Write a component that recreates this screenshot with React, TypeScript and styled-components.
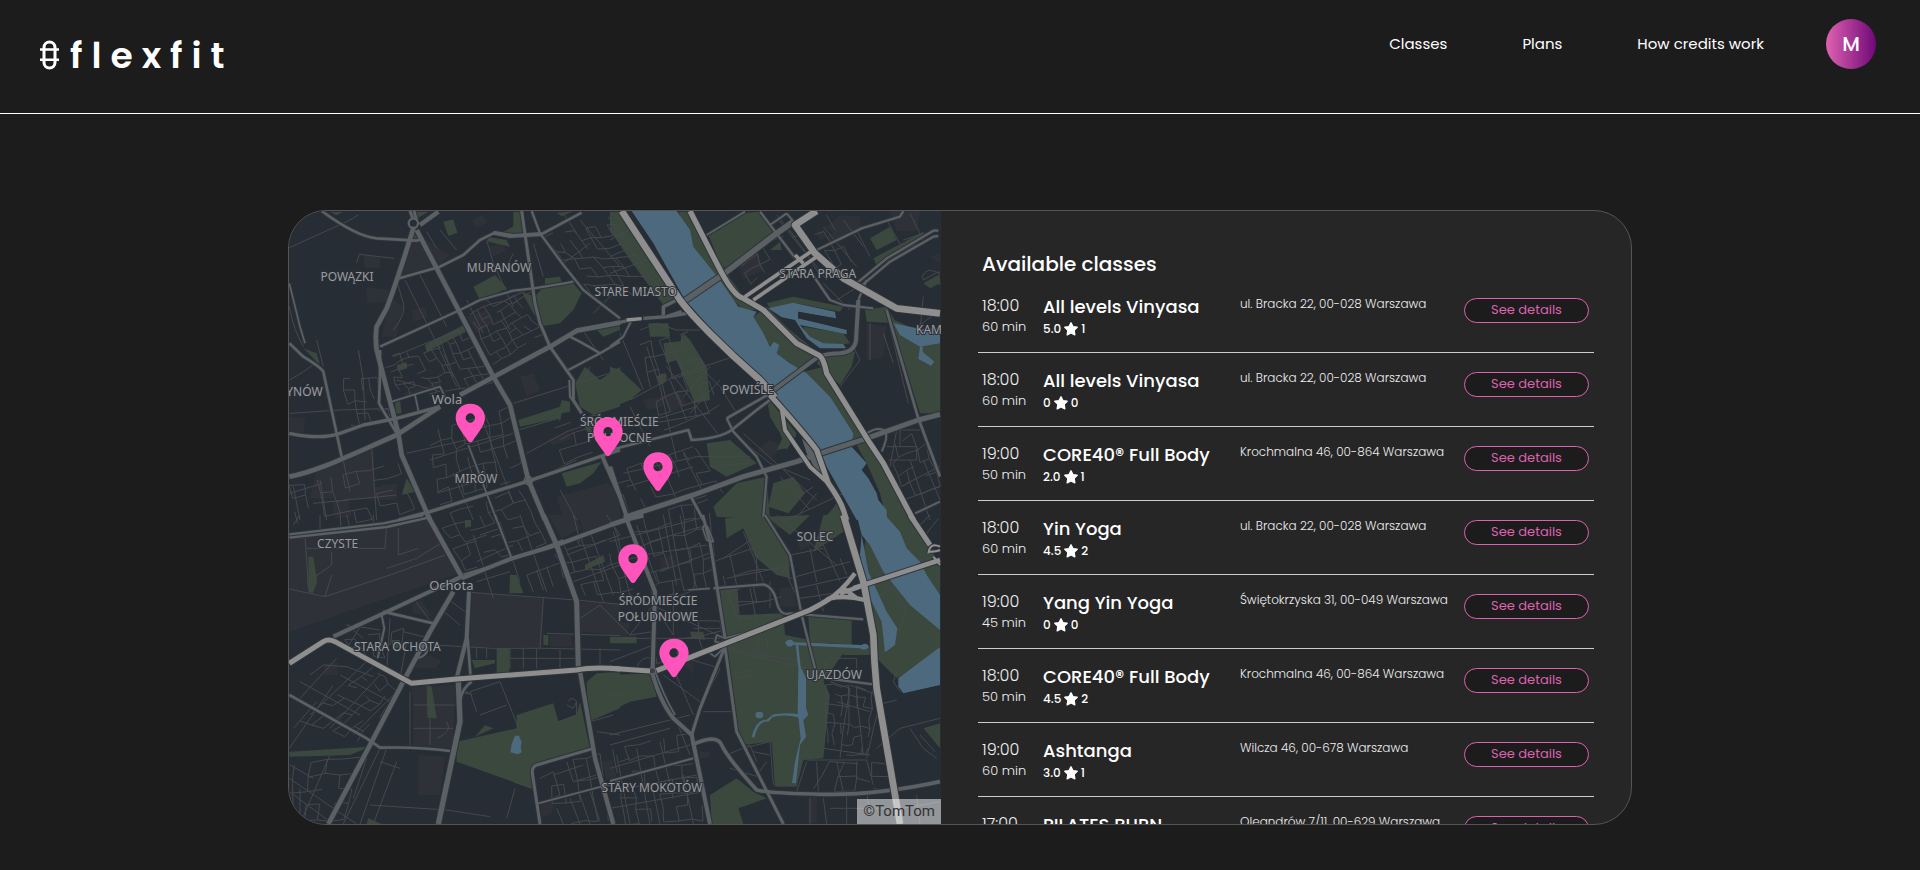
import React from 'react';
import styled, { createGlobalStyle } from 'styled-components';

const GlobalStyle = createGlobalStyle`
  *, *::before, *::after { box-sizing: border-box; }
  body {
    margin: 0;
    background: #1c1c1c;
    color: #fff;
    font-family: Poppins, Inter, 'Noto Sans', sans-serif;
  }
`;

/* ---------- header ---------- */

const Header = styled.header`
  display: flex;
  justify-content: space-between;
  align-items: flex-start;
  height: 114px;
  padding: 19px 44px 0 40px;
  border-bottom: 1px solid #fff;
`;

const Brand = styled.a`
  display: flex;
  align-items: center;
  gap: 11px;
  height: 72px;
  color: #fff;
  font-size: 36px;
  font-weight: 600;
  letter-spacing: 9px;
  text-decoration: none;
`;

const Nav = styled.nav`
  display: flex;
  align-items: center;
  gap: 75px;
  height: 50px;
`;

const NavLink = styled.a`
  color: #fff;
  font-size: 15px;
  line-height: 22px;
  text-decoration: none;
`;

const Avatar = styled.button`
  width: 50px;
  height: 50px;
  margin-left: -13px;
  padding: 0;
  border: 0;
  border-radius: 50%;
  background: linear-gradient(90deg, #de62b0, #6f0877);
  color: #fff;
  font: inherit;
  font-size: 20px;
  font-weight: 500;
`;

/* ---------- page ---------- */

const Main = styled.main`
  padding: 96px 15% 45px;
`;

const Card = styled.div`
  display: grid;
  grid-template-columns: 652fr 690fr;
  height: calc(100vh - 255px);
  min-height: 400px;
  border: 1px solid #555;
  border-radius: 38px;
  background: #262626;
  overflow: hidden;
`;

const MapPane = styled.section`
  position: relative;
  min-width: 0;
  min-height: 0;
  background: #272d35;
  overflow: hidden;
`;

const MapSvg = styled.svg`
  display: block;
  width: 100%;
  height: 100%;
`;

const Attribution = styled.a`
  position: absolute;
  right: 0;
  bottom: 0;
  padding: 0 6px;
  background: rgba(255, 255, 255, 0.5);
  color: #333;
  font-family: Roboto, sans-serif;
  font-size: 15px;
  line-height: 25px;
  text-decoration: none;
`;

const ListPane = styled.section`
  min-width: 0;
  min-height: 0;
  padding: 38px 37px 0;
  overflow-y: auto;
  scrollbar-width: none;
`;

const Heading = styled.h1`
  margin: 0;
  padding-left: 4px;
  font-size: 20px;
  font-weight: 500;
  line-height: 30px;
`;

const List = styled.ul`
  margin: 0;
  padding: 0;
  list-style: none;
`;

const Row = styled.li`
  display: grid;
  grid-template-columns: 61px 197px 1fr 125px;
  align-items: start;
  height: 74px;
  padding: 16px 5px 0 4px;
  border-bottom: 1px solid #ccc;
`;

const Stack = styled.div`
  display: flex;
  flex-direction: column;
`;

const Time = styled.time`
  font-size: 16px;
  font-weight: 300;
  line-height: 22px;
  color: #eee;
`;

const Duration = styled.span`
  font-size: 13px;
  font-weight: 300;
  line-height: 20px;
  color: #eee;
`;

const Name = styled.h2`
  margin: 0;
  font-size: 18px;
  font-weight: 500;
  line-height: 24px;
  white-space: nowrap;
`;

const Rating = styled.span`
  display: flex;
  align-items: center;
  gap: 3px;
  font-size: 12px;
  font-weight: 500;
  line-height: 19px;
`;

const Address = styled.address`
  font-size: 12px;
  font-style: normal;
  font-weight: 300;
  line-height: 18px;
  color: #eee;
  white-space: nowrap;
`;

const DetailsButton = styled.button`
  height: 25px;
  margin-top: 3px;
  padding: 0 0 1px;
  border: 1px solid #de62b0;
  border-radius: 13px;
  background: #1c1c1c;
  color: #de62b0;
  font: inherit;
  font-size: 13px;
  line-height: 20px;
`;

/* ---------- map data ---------- */
/* The city is cut into four tiles; every tile has its own origin. */

type Road = [width: number, d: string];
interface Tile {
  x: number;
  y: number;
  urban: string;
  green: string;
  water: string;
  minor: string;
  mid: Road[];
  major: Road[];
}

const tiles: Tile[] = [
  {
    x: 0, y: 0,
    urban: 'M250 165l50 5v35l-45 0ZM258 262l82 8-20 35-58 5ZM400 115l30 0 80 50-40 35-110 35ZM330 290l40 30-20 90-45 0ZM200 780l80-35 5 115 65-10v50l-260-5 20-85ZM560 350l60-20 20 40-50 30ZM395 330l40-10 10 30-45 15ZM720 530l40-10 20 50-40 20ZM830 890l150-40 40 20v90H850ZM28 650l47 5-5 45-42-10ZM575 60l30-15 20 20-35 20ZM625 140l40-10 15 20-40 20ZM370 580l110-35 5 20-110 30ZM800 720l60-25 20 20-60 20ZM155 900l50 0 10 50-50 5Z',
    green: 'M490 65l30-7 12 40-27 10ZM580 260l65-35 35 40-40 20-40 15ZM725 275l40 15 25-30 90-10 25 30-25 50-40 40-50 8-30-38ZM795 235l45-5 5 15-50 10ZM435 435l115-60 8 20-118 60ZM350 495l30-8 2 18-28 8ZM700 35h30v70l-70-5 40-20ZM620 110l60 10 10 20-65-15ZM885 550l30-50 45 40 60-40v120l-80 25-40-25ZM715 660l125-40 5-20 25 5v30l-25 5-5 25-5-10-115 25ZM845 820l120-35-25 35-40 30-40 10ZM345 605l15-5 5 40-18 2ZM365 885l40-10-25-40ZM400 95l20 25-30 5ZM400 35h45l-30 18ZM70 445l40 15 10 35ZM1000 40h20v70l-25-15ZM950 390l70-20v20l-50 20ZM150 36l40 0-20 10ZM830 38l50-4-35 15ZM910 670l20 0 10 40-15-5Z',
    water: '',
    minor: 'M28 143L200 65M200 65l35-20M230 188l8-25 105 12M28 320Q40 390 70 440M110 420l20 80M375 240L470 430 530 560M420 225L500 380M340 390Q380 340 370 310L350 240M235 450l15 90 5 120M28 540q40-20 90-60M28 640L180 630 340 625M185 760l25 115M275 745l15 215M28 880l100-30M100 910L350 885M40 860L60 960M120 840L140 960M480 90l50 60M440 95l30 50M620 120l20 70 60 130M700 160l-30 60M850 40l40 60M760 130L790 230M900 60L1020 200M850 190l80-60M700 610L1020 510M715 690l120-35M740 760l120-65 120-40M780 830l110-50M450 780L700 700M470 880L640 830M520 820l60 140M600 640L700 910M380 760l200-45M840 870l50 90M350 540L480 575M340 470L560 380M480 420l40 110M940 340l80-80M900 380L970 480M985 50l35 60M930 500l-20 40M560 300L610 400M600 280l40 40 120-60M660 330l30 60M700 310l60-40',
    mid: [
      [14, 'M400 85C380 150 345 260 320 325L290 380Q285 410 290 450L355 700 365 765 450 960'],
      [8, 'M300 450V520L297 610 350 700'],
      [14, 'M410 90L640 530 690 615 745 840 795 960'],
      [14, 'M28 830C110 815 200 770 350 705L480 620M540 585L810 440 890 392 1020 368'],
      [10, 'M28 700Q120 720 180 700L250 675 350 655 480 620'],
      [8, 'M125 33Q230 110 290 115L410 122 430 115M28 430L70 470Q120 500 130 515L185 770'],
      [8, 'M350 237L480 200 550 165 600 120 640 100 690 110 780 105 905 38M640 96L700 106 785 100'],
      [7, 'M300 440L540 330 600 300 700 272 760 265M760 265Q830 255 880 245'],
      [9, 'M725 33L755 240 765 310 780 370 810 440 880 540 880 600 905 640'],
      [6, 'M868 540L870 590 900 632'],
      [7, 'M755 33L780 100 850 195 910 270 1020 355M865 510L960 460 1020 425M870 410Q910 430 960 460'],
      [9, 'M390 33L400 60M402 33L410 60'],
      [13, 'M420 75L475 35'],
      [10, 'M355 960L450 935 740 845 965 768 1020 750'],
      [12, 'M965 765L1020 890'],
      [5, 'M335 605L480 560 500 600M565 735L650 960M405 585l12 55M28 250L60 380 75 430'],
    ],
    major: [],
  },
  {
    x: 990, y: 0,
    urban: 'M380 180l60-30 20 60-60 30ZM620 100l30-20 20 20-40 20ZM840 33l90 0-10 60-60 0ZM640 90l20 40 90-50 0-30-60-5ZM770 370l60 10-10 90-50 10ZM160 590l50-20 20 40-50 30ZM100 600l60-10 0 30-50 10ZM440 750l40 -30 40 20-40 35ZM390 180l40-15 15 40-40 15ZM960 170l30-10v30Z',
    green: 'M0 35h30L215 300l-55 15L60 180 0 90ZM205 35h40L350 220l50 70 60 40-60 0-80-80-70-100-20-50ZM295 105l100-65 55-5 50 65-150 110-20-20ZM430 350l40-30 70 70 100 80-70 40-70-50-50-60ZM470 310l80-20 150 30-10 15-130-25-80 15ZM580 380l120 20 20 30-80 10-50-30ZM640 460l95-5-10 45-35 55-70-65ZM580 515l60-15 60 100 80 120 70 110 70 130h-90l-20-80-40-90-50-90-70-110ZM780 115l60-35 20 40-60 30ZM790 175l150-80 5 10-65 65-80 25ZM765 330l65-10 30 50-90-5ZM840 355l150 65v220h-60ZM0 500l30 10 65 60-35 30-60 25ZM160 430l80-10 50 80 10 100-45 10-55-130-30 10ZM115 370h60l5 40h-60ZM140 530q30-20 30 0t-20 25ZM290 730l70-10 80 70-90 40-50-30ZM310 920l70-70 90-20 10 130-160-10ZM490 850l60-20 35 50-50 60-60-20ZM470 590l90 110-30 50-20-50-30-50ZM640 960l40-50 40 50ZM480 150l30-25 5 25ZM500 750l20-40 40-5-30 40ZM0 380l25-8-5 20-20 5ZM220 400l20 20-15 20-15-15ZM940 250l45-25 5 25-30 15Z',
    water: 'M65 33H200L240 90 250 140 330 240 385 320 440 335 430 350 460 400 480 440 492 425 508 435 500 460 540 490 590 520 660 590 730 700 725 740 770 790 755 810 775 835 800 880 805 900 830 930V960H740L650 800 625 740 490 580 370 460 225 300 130 130ZM475 325L550 308 675 335 678 355 565 335 565 355 710 390V403L570 375 600 410 640 430 700 432 708 445 630 445 590 415 555 360 515 352ZM850 370L935 388 990 385V430L930 440 870 405ZM930 440h8v15l35 30-10 12-38-20Z',
    minor: 'M90 390L140 370 200 390 270 390M30 400L100 570M60 600L190 530 370 470M110 440L150 560 200 780M170 500l60 80 100 130M240 470L330 560 380 640M300 500l-80 90M330 540l-90 100M60 620L120 740M180 540l50 120M130 660L260 620M70 680L300 640M130 780L250 740M40 820L260 770 420 770M50 860l200-60M150 780l50 120M220 760l60 120M300 800L420 790M200 480l20 40M500 100l60 90M530 80l120 160M460 130l60-20M640 80L740 200M700 60l60 80M740 90l40 80M830 60l50 90M900 40l40 80M880 120l60-20M640 250L720 330M680 300L760 250M940 290L930 390M910 390L990 330M690 560L750 480 730 440M780 370V480M820 400L850 490M830 340L895 610M560 690L660 760M510 830L600 930M550 900l60-40M570 940l50-60M530 960L700 880M370 700L480 790 600 840M400 700L620 900M830 740h90v40h-85M840 800L860 690M860 690h70M870 680v60M890 850L990 800M880 900L990 860M900 780L960 960M940 780L990 900M940 240l45-25 5 40M940 240q-10-20 20-30l30 10M0 120L60 90 130 200M0 170L70 140M0 220L110 180M20 80L110 240M500 45l50 60M620 480l60 60',
    mid: [
      [17, 'M220 305L330 230 350 215 500 100 550 65'],
      [12, 'M485 575L625 470Q660 460 690 460 735 455 738 420L745 300'],
      [8, 'M0 750L235 690 245 720Q330 715 365 690L440 630 480 600M350 655L490 575'],
      [7, 'M350 655L370 695 440 770 470 830 460 950'],
      [15, 'M50 950L250 885 400 830 560 785 640 757 770 715 925 660 990 643'],
      [8, 'M240 885L280 960M830 330L925 655 990 830'],
      [12, 'M0 800L50 950'],
      [7, 'M450 35L560 180M605 220L660 300 700 315 790 325M620 150L755 85 870 50 880 33M740 250L830 175 970 92 985 92M745 265L840 185 970 110 985 108'],
      [6, 'M290 105L405 35M480 75L530 40M530 40l25 30M0 440L40 410 65 360M745 300L770 240M770 700Q800 680 820 690T815 755M915 940L990 905'],
      [10, 'M0 374L60 360M100 355L170 350 215 335M160 345V320L200 300M170 350l60 -10'],
    ],
    major: [
      [20, 'M35 33L210 300Q240 340 300 400L370 468 450 540 495 592'],
      [16, 'M480 585L520 630Q590 710 620 750L655 850Q690 900 700 930L710 960'],
      [12, 'M515 625L525 690 600 800 655 850'],
      [16, 'M240 33L320 190Q370 290 400 295L460 330 560 430 625 465Q640 470 650 520L780 730 820 790 910 960'],
      [20, 'M620 33L555 75 615 160 700 235 860 325 990 340'],
      [11, 'M405 290L610 150M430 300L620 170M555 165L580 190'],
      [10, 'M50 360L95 356'],
    ],
  },
  {
    x: 0, y: 945,
    urban: 'M28 70l292-30 120-25 100 160-340 115-172 60ZM575 232l215 18-5 150-215-5ZM395 515l130-5-5 190-120-5v-130ZM415 720l80 5-15 115h-65ZM895 260l125 5v95l-120-10ZM805 0h80l20 40-60 30ZM900 0h120v20l-110 40ZM395 270l30-15 30 50-55-10ZM410 430l40-10 35 20-20 20-60 0ZM810 360h65v35h-65ZM965 740l30-5 15 50-30 10ZM780 865l40 0-5 35-30 5ZM130 445l40 0 5 35-40 0Z',
    green: 'M85 125h15l12 75-14 35-13-5ZM440 510l15 5 15 95-28-2ZM530 680l180-40v-40l110-35 15 55 55-20 10-40 30 140-170 50-5 70-225-80ZM920 500l30-25 70-5v110l-95 40ZM690 180h20l20 55h-42ZM650 400h38v75h-38ZM575 435h70v10l-60 15ZM28 710l242-15-60 25-182 5ZM585 665l30-35 25 10ZM265 910l40 17h-45ZM915 150l55-30 5 20-60 25ZM555 15h18v20l-18 3ZM530 510l50 30-45-5ZM335 375l25 0-5 25-18 0ZM790 360l15 0v30h-15Z',
    water: 'M705 662h12l8 20-3 15 3 15-12 6-22-6 4-25Z',
    minor: 'M28 222L135 245 330 180 510 115M80 100H315L320 30M75 60L85 220M155 110v40l-50 35M155 180L135 245M355 40v80l60-20M320 160L410 130 490 80M40 30L60 0M120 0V40M200 0l10 40M280 0v30M400 250L460 330M480 280L540 330M500 250L555 290M460 390L640 400 800 400 1020 405M570 232L890 255 1020 268M790 250L780 400M690 400V460M730 400v60M770 400v60M840 405v55M590 400v30M620 400v30M690 430H890M800 355L1020 362M960 400v50M90 480l40-30 70 5 80 30M60 550L170 430M90 600L260 440M150 640L300 480M220 660L340 540M40 640L110 560M28 700L160 510M60 500L240 600M180 480L330 560M28 790L230 927M28 830L150 920M60 820v90M100 790L30 750M190 927L300 700M260 730L220 850M320 700L240 927M350 740L280 927M150 720L60 927M270 870L500 885 630 905M300 740l60 20M200 400L250 320M380 380L360 490M330 310L320 470M370 350l80 20M250 370L200 330 300 345M390 530L390 690M400 570H525M400 640H520M450 610V690M500 620q20 30-30 50M590 590L570 530 660 500 720 650M600 600L680 570M705 820L680 910M755 820L700 800M830 880L850 927M870 850L900 927M900 840L930 927M930 830L960 920M820 780l90-30M780 790l40-20 20 70-50 20M860 740l20 60 70-20M930 620L1000 600M950 650L1020 660M865 560q10-20 25 0l-10 20-20-10M890 560V600L835 620M580 60L640 250M660 20L720 200M720 0L800 230M600 60l60-20 20 60M560 80L620 60M590 140L700 90M740 180l110-40M740 180l20 50M770 165l20 60M800 155l20 60M840 140l10 50M590 200L690 170M900 60L970 260M930 50L1000 240M860 120L1020 60M880 200L1020 150M900 310l60-40 60 60M880 0L900 80M980 0l40 60',
    mid: [
      [7, 'M28 58L310 25 430 0M28 68L320 36 445 8'],
      [14, 'M442 0L545 185'],
      [12, 'M545 190L690 132 830 90 1020 20'],
      [5, 'M550 178L680 140 850 75'],
      [6, 'M645 0L695 130'],
      [15, 'M790 0L830 90 890 260 895 460'],
      [12, 'M160 365L300 300 460 225 545 185'],
      [14, 'M520 230L450 350 375 490 270 690 145 927'],
      [12, 'M567 230L560 370 530 490'],
      [8, 'M563 370L572 490M310 290L460 325M28 540L260 670 300 698Q420 695 510 708'],
      [6, 'M305 300L313 340 293 430M410 430Q450 420 440 390'],
      [16, 'M535 500L540 620 475 927'],
      [8, 'M575 500Q545 520 540 560'],
      [13, 'M900 470L945 730 1000 927'],
      [9, 'M940 700L770 750Q755 755 757 775L780 927'],
      [5, 'M775 865L1020 800'],
    ],
    major: [[15, 'M28 445L130 380Q145 370 165 380L395 505 530 492 890 465Q940 455 1020 462']],
  },
  {
    x: 990, y: 945,
    urban: 'M150 130l40-10 10 30-45 20ZM0 315l60 10-10 40-50-5ZM510 220l40 -5 10 60-50 0ZM560 75l40-5 0 25-30 10ZM595 840l25 5 0 80-25 0ZM270 710l30 0-5 20-25 0ZM220 445l30-5 0 40ZM475 0l30 10 10 30-20 0Z',
    green: 'M345 10L460 5 535 110 540 190 500 180 435 125 400 40 350 70ZM470 5L600 0 540 60ZM330 225L380 220 385 300 520 295 525 360 700 395 700 415 640 500 660 540 640 730 580 735 560 815H495L485 680 400 690 380 640 350 400 340 360ZM595 305H725V390L600 380ZM0 480L125 475 140 545 60 560 0 590ZM780 0H900L990 150V440L920 460 860 490 780 410 770 240 750 170ZM300 840L380 790 430 830 470 850 385 880 400 927H305ZM940 640L990 625V700ZM610 110L700 50 690 0H640ZM240 350h40l5 25-40-5ZM0 365h80v20H0ZM700 390l95 5 0 25-95 0Z',
    water: 'M740 0H825L870 50 890 100 930 140 950 180 990 240V345L900 270 820 170 780 90 755 60ZM755 60L775 170 830 290 862 340 855 390 825 412 815 320 770 230 750 120ZM865 490L985 400H990V510L880 535 865 515ZM525 383Q540 365 552 382L755 390Q770 380 777 396 765 410 750 400L550 390Q535 402 525 383ZM557 390H565L572 455 588 490V580L595 600 580 615 588 665 570 690 558 805H546L555 740 572 670 563 590 565 460ZM425 665Q440 612 470 614L490 598Q550 590 575 602L570 608Q520 596 488 606L475 620Q445 615 433 668ZM436 600a12 10 0 1 1 24 0a12 10 0 1 1-24 0Z',
    minor: 'M0 80L270 10M0 150L100 120 290 90M150 170L310 110M10 50L60 240M80 30L140 200M160 0L200 210M210 0L260 220M120 80L290 30M60 240L345 370M0 300L60 360 130 350M60 360L130 270 240 230M190 360L130 270M0 370H340M190 230V360M0 440L130 390M80 460Q90 420 130 430M310 140L460 90M350 190L550 150M340 130L430 70M400 50L460 200M360 120L380 210M440 120V200M380 220L390 330M420 220L440 320M380 260H470M480 200V280M515 180L540 120 640 100M540 190L720 140M560 220L740 180M600 100L620 200M640 90L690 200M690 130L710 180M570 250L700 230M620 210L640 290M500 0L680 150M350 405L590 460M350 400L570 440M0 660L240 600M0 690L180 640M20 720L60 927M80 700L120 927M150 680L190 850M200 620L240 720M30 740L60 730M0 760L240 690M0 830L260 780M0 880L280 830M130 830L150 927M220 780L250 927M160 480L270 560M190 460L250 600M230 430L330 460M280 590H370M300 520L330 460M350 720L420 690 440 740M360 760L460 790M400 700L480 680 490 810M430 710L480 720M440 780L470 740M650 430H740V460M650 430L640 480 790 510M660 500L720 520 700 640 690 730M720 510L800 540M680 560L780 590M740 540L760 720M800 600L770 730M590 735H770L790 810M640 700L780 720M620 740L625 830M680 740L700 830M740 740V790L780 800M590 740L560 830M600 850V927M640 850L650 927M710 840V927M770 830L780 900M660 880H850M880 880L990 860M920 840L930 927M800 700L870 640 990 610M900 640L940 700 980 730M930 660L975 710M800 570L860 555M860 470L850 500 870 530M810 240L850 220 890 280 860 370 820 410M790 160L840 220 880 200M900 60L960 0M930 80L985 10M250 340L340 340M0 540H30M445 370l30 5-5 40-25-5ZM375 475l50-10 0 15-48 8Z',
    mid: [
      [15, 'M0 30L60 10 100 0'],
      [12, 'M45 0L80 90 135 230 128 460'],
      [9, 'M278 0L300 80 345 370'],
      [5, 'M278 40Q285 20 295 40L310 80 290 75ZM235 225L300 220'],
      [7, 'M310 220L460 208Q490 215 500 260T540 295L760 313M465 0L540 120 575 300 615 460M650 490L790 508'],
      [12, 'M125 468Q150 560 190 610L245 660 300 927'],
      [5, 'M135 468Q160 540 195 600M345 370L320 360 315 380 345 385M345 395L315 425 300 415'],
      [9, 'M345 395L270 580 245 660M345 395L380 650 520 927'],
      [11, 'M245 690Q320 655 335 690T440 825Q480 835 640 838T990 800'],
      [6, 'M0 798L250 730M345 370L400 355M0 880l10 47'],
    ],
    major: [
      [15, 'M0 460L120 468M140 467L600 285Q640 265 660 250'],
      [14, 'M730 220L990 135'],
      [20, 'M700 0L760 200 790 360Q792 440 800 520L870 927'],
      [13, 'M650 256Q690 235 735 175M660 250Q710 240 765 255M700 220L740 250M690 235L750 215'],
      [15, 'M900 0L960 90'],
      [6, 'M955 115Q960 80 990 95M955 110Q980 110 990 105M970 125L990 150'],
    ],
  },
];

/* Side streets: each block is a quadrilateral filled with an uneven grid. */
type Block = [number, number, number, number, number, number, number, number, number, number];

const blocks: Block[] = [
  [310, 480, 560, 385, 640, 550, 370, 590, 11, 6],
  [570, 340, 700, 290, 790, 400, 640, 490, 6, 6],
  [790, 110, 1010, 70, 1150, 290, 930, 280, 7, 7],
  [440, 700, 690, 620, 730, 830, 480, 910, 7, 6],
  [190, 540, 290, 530, 330, 660, 210, 680, 4, 4],
  [30, 860, 350, 790, 400, 930, 60, 1010, 8, 4],
  [470, 950, 720, 870, 800, 1030, 560, 1110, 7, 5],
  [830, 680, 960, 640, 980, 740, 850, 790, 3, 3],
  [1080, 430, 1230, 400, 1320, 620, 1150, 690, 5, 6],
  [1000, 820, 1250, 740, 1330, 880, 1050, 940, 6, 4],
  [1050, 960, 1280, 900, 1310, 1150, 1120, 1200, 6, 6],
  [810, 1030, 1000, 970, 1060, 1170, 880, 1190, 5, 5],
  [1330, 1130, 1520, 1100, 1560, 1230, 1370, 1260, 5, 3],
  [60, 1560, 280, 1400, 360, 1480, 230, 1620, 6, 5],
  [190, 1320, 370, 1290, 360, 1420, 250, 1380, 5, 3],
  [40, 1690, 240, 1670, 190, 1860, 40, 1860, 4, 4],
  [1000, 1650, 1230, 1600, 1270, 1860, 1040, 1870, 6, 6],
  [1640, 1450, 1780, 1470, 1760, 1670, 1640, 1660, 6, 7],
  [1820, 750, 1920, 690, 1980, 860, 1880, 900, 4, 4],
  [1500, 60, 1640, 40, 1710, 190, 1620, 220, 4, 3],
  [1370, 170, 1440, 130, 1480, 200, 1410, 250, 3, 3],
  [1120, 1280, 1320, 1260, 1330, 1330, 1130, 1390, 3, 2],
  [1650, 1690, 1820, 1690, 1840, 1770, 1600, 1770, 4, 2],
  [800, 1700, 960, 1660, 990, 1860, 830, 1870, 4, 3],
];

function noise(n: number) {
  const s = Math.sin(n * 12.9898) * 43758.5453;
  return s - Math.floor(s);
}

function sideStreets([ax, ay, bx, by, cx, cy, dx, dy, cols, rows]: Block, seed: number) {
  const node = (i: number, j: number) => {
    const u = i / cols;
    const v = j / rows;
    const k = seed * 997 + i * 31 + j * 7;
    const px = (ax * (1 - u) + bx * u) * (1 - v) + (dx * (1 - u) + cx * u) * v;
    const py = (ay * (1 - u) + by * u) * (1 - v) + (dy * (1 - u) + cy * u) * v;
    return `${Math.round(px + noise(k) * 10 - 5)} ${Math.round(py + noise(k + 3) * 10 - 5)}`;
  };
  let d = '';
  for (let i = 0; i <= cols; i++) {
    for (let j = 0; j <= rows; j++) {
      const k = seed * 131 + i * 17 + j * 5;
      if (i < cols && noise(k) > 0.42) d += `M${node(i, j)}L${node(i + 1, j)}`;
      if (j < rows && noise(k + 2) > 0.42) d += `M${node(i, j)}L${node(i, j + 1)}`;
    }
  }
  return d;
}

const streetPath = blocks.map(sideStreets).join('');

const labels: [x: number, y: number, text: string][] = [
  [201, 242, 'POWĄZKI'],
  [657, 216, 'MURANÓW'],
  [1067, 288, 'STARE MIASTO'],
  [1613, 234, 'STARA PRAGA'],
  [2002, 402, 'KAMIONEK'],
  [48, 587, 'MŁYNÓW'],
  [1403, 582, 'POWIŚLE'],
  [1018, 677, 'ŚRÓDMIEŚCIE'],
  [1018, 725, 'PÓŁNOCNE'],
  [588, 849, 'MIRÓW'],
  [173, 1043, 'CZYSTE'],
  [1605, 1022, 'SOLEC'],
  [1134, 1215, 'ŚRÓDMIEŚCIE'],
  [1134, 1263, 'POŁUDNIOWE'],
  [352, 1352, 'STARA OCHOTA'],
  [1662, 1437, 'UJAZDÓW'],
  [1116, 1775, 'STARY MOKOTÓW'],
];

const towns: [x: number, y: number, text: string][] = [
  [501, 611, 'Wola'],
  [514, 1170, 'Ochota'],
];

const pins: [x: number, y: number][] = [
  [571, 654],
  [984, 695],
  [1134, 800],
  [1059, 1076],
  [1182, 1359],
];

const MapLabel = styled.text<{ $town?: boolean }>`
  font-family: 'Noto Sans', sans-serif;
  font-size: ${(p) => (p.$town ? 39 : 36)}px;
  font-weight: 400;
  text-anchor: middle;
  fill: #9a9c9f;
  stroke: #2b3037;
  stroke-width: 6px;
  paint-order: stroke;
`;

function Roads({ kind, color, casing }: { kind: 'mid' | 'major'; color: string; casing: string }) {
  const draw = (stroke: string, extra: number) =>
    tiles.map((t) => (
      <g key={`${stroke}${t.x}-${t.y}`} transform={`translate(${t.x} ${t.y})`} stroke={stroke}>
        {t[kind].map(([w, d]) => (
          <path key={d} d={d} strokeWidth={w + extra} />
        ))}
      </g>
    ));
  return (
    <g fill="none" strokeLinejoin="round">
      {draw(casing, 6)}
      {draw(color, 0)}
    </g>
  );
}

function CityMap() {
  const area = (key: 'urban' | 'green' | 'water', fill: string) =>
    tiles.map((t) => (
      <path key={`${key}${t.x}-${t.y}`} transform={`translate(${t.x} ${t.y})`} d={t[key]} fill={fill} />
    ));
  return (
    <MapSvg viewBox="27 33 1956 1839" preserveAspectRatio="xMidYMid slice" role="img" aria-label="Map of Warsaw">
      {area('urban', '#2f3138')}
      {area('green', '#3a483e')}
      <g fill="none" stroke="#46484b" strokeWidth="3">
        <path d={streetPath} />
        {tiles.map((t) => (
          <path key={`m${t.x}-${t.y}`} transform={`translate(${t.x} ${t.y})`} d={t.minor} />
        ))}
      </g>
      {area('water', '#4d697e')}
      <path d="M1554 335l110 22v20l-110-22Z" fill="#272d35" />
      <Roads kind="mid" color="#5a6064" casing="#2f343a" />
      <circle cx="400" cy="70" r="14" fill="#272d35" stroke="#5a6064" strokeWidth="7" />
      <circle cx="745" cy="842" r="12" fill="none" stroke="#5a6064" strokeWidth="5" />
      <circle cx="1117" cy="1412" r="10" fill="#3a3f44" stroke="#5a6064" strokeWidth="5" />
      <path d="M1565 715l30 30 35 75-15 5-35-65Z" fill="#5a6064" />
      <Roads kind="major" color="#8e8e8e" casing="#30353b" />
      {labels.map(([x, y, text]) => (
        <MapLabel key={`${text}${y}`} x={x} y={y}>{text}</MapLabel>
      ))}
      {towns.map(([x, y, text]) => (
        <MapLabel key={text} x={x} y={y} $town>{text}</MapLabel>
      ))}
      {pins.map(([x, y]) => (
        <path
          key={`${x}-${y}`}
          transform={`translate(${x} ${y})`}
          fill="#ff54bb"
          fillRule="evenodd"
          d="M-7 69C-22 46-44 22-44 0C-44-25-25-43 0-43S44-25 44 0C44 22 22 46 7 69Q0 77-7 69ZM-14 0a14 14 0 1 0 28 0a14 14 0 1 0-28 0Z"
        />
      ))}
    </MapSvg>
  );
}

/* ---------- classes ---------- */

const classes = [
  { time: '18:00', length: 60, name: 'All levels Vinyasa', score: '5.0', votes: 1, address: 'ul. Bracka 22, 00-028 Warszawa' },
  { time: '18:00', length: 60, name: 'All levels Vinyasa', score: '0', votes: 0, address: 'ul. Bracka 22, 00-028 Warszawa' },
  { time: '19:00', length: 50, name: 'CORE40® Full Body', score: '2.0', votes: 1, address: 'Krochmalna 46, 00-864 Warszawa' },
  { time: '18:00', length: 60, name: 'Yin Yoga', score: '4.5', votes: 2, address: 'ul. Bracka 22, 00-028 Warszawa' },
  { time: '19:00', length: 45, name: 'Yang Yin Yoga', score: '0', votes: 0, address: 'Świętokrzyska 31, 00-049 Warszawa' },
  { time: '18:00', length: 50, name: 'CORE40® Full Body', score: '4.5', votes: 2, address: 'Krochmalna 46, 00-864 Warszawa' },
  { time: '19:00', length: 60, name: 'Ashtanga', score: '3.0', votes: 1, address: 'Wilcza 46, 00-678 Warszawa' },
  { time: '17:00', length: 50, name: 'PILATES BURN', score: '0', votes: 0, address: 'Oleandrów 7/11, 00-629 Warszawa' },
];

const Star = () => (
  <svg width="14" height="14" viewBox="0 0 14 14" aria-hidden="true">
    <path
      d="M7 .8L8.9 4.6 13.2 5.2 10.1 8.2 10.8 12.8 7 10.8 3.2 12.8 3.9 8.2.8 5.2 5.1 4.6Z"
      fill="#fff" stroke="#fff" strokeWidth="1.4" strokeLinejoin="round"
    />
  </svg>
);

const LogoMark = () => (
  <svg width="19" height="30" viewBox="0 0 19 30" fill="none" stroke="#fff" aria-hidden="true">
    <rect x="4" y="2" width="11" height="26" rx="5.5" strokeWidth="3" />
    <path d="M0 9.5H19M0 19.8H19" strokeWidth="2.4" />
  </svg>
);

export default function App() {
  return (
    <>
      <GlobalStyle />
      <Header>
        <Brand href="#home">
          <LogoMark />
          flexfit
        </Brand>
        <Nav>
          <NavLink href="#classes">Classes</NavLink>
          <NavLink href="#plans">Plans</NavLink>
          <NavLink href="#credits">How credits work</NavLink>
          <Avatar type="button">M</Avatar>
        </Nav>
      </Header>
      <Main>
        <Card>
          <MapPane>
            <CityMap />
            <Attribution href="#tomtom">©TomTom</Attribution>
          </MapPane>
          <ListPane>
            <Heading>Available classes</Heading>
            <List>
              {classes.map((c, i) => (
                <Row key={i}>
                  <Stack>
                    <Time>{c.time}</Time>
                    <Duration>{c.length} min</Duration>
                  </Stack>
                  <Stack>
                    <Name>{c.name}</Name>
                    <Rating>
                      {c.score}
                      <Star />
                      {c.votes}
                    </Rating>
                  </Stack>
                  <Address>{c.address}</Address>
                  <DetailsButton type="button">See details</DetailsButton>
                </Row>
              ))}
            </List>
          </ListPane>
        </Card>
      </Main>
    </>
  );
}
